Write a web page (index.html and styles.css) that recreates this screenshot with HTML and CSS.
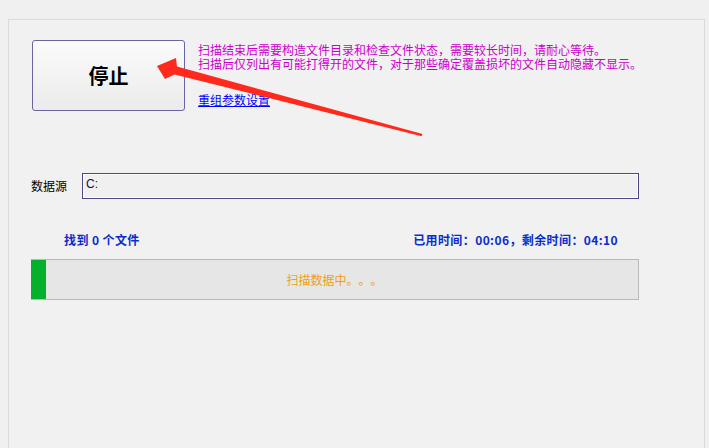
FILE: index.html
```html
<!DOCTYPE html>
<html>
<head>
<meta charset="utf-8">
<link rel="stylesheet" href="styles.css">
</head>
<body>
<div class="panel">
  <div class="top-row">
    <button class="stop-btn">停止</button>
    <div class="info">
      <div class="notes">
        <div>扫描结束后需要构造文件目录和检查文件状态，需要较长时间，请耐心等待。</div>
        <div>扫描后仅列出有可能打得开的文件，对于那些确定覆盖损坏的文件自动隐藏不显示。</div>
      </div>
      <a class="link" href="#">重组参数设置</a>
    </div>
  </div>
  <div class="source-row">
    <span class="label">数据源</span>
    <div class="source-box">C:</div>
  </div>
  <div class="status-row">
    <span>找到 0 个文件</span>
    <span>已用时间：00:06，剩余时间：04:10</span>
  </div>
  <div class="progress">
    <div class="fill" style="width:15px"></div>
    <div class="progress-text">扫描数据中。。。</div>
  </div>
</div>
<svg class="arrow" width="709" height="448" viewBox="0 0 709 448">
  <polygon points="157,66 176,58 177,66.5 422.5,134 421.5,136.2 174.5,74.5 165,79" fill="#ff2a1c"/>
</svg>
</body>
</html>
```
FILE: styles.css
```css
html, body {
  margin: 0;
  padding: 0;
  background: #f0f0f0;
  width: 709px;
  height: 448px;
  overflow: hidden;
  font-family: "Noto Sans CJK SC", "Liberation Sans", sans-serif;
  font-size: 12px;
  text-spacing-trim: space-all;
}
.panel {
  margin: 19px 0 0 8px;
  width: 697px;
  height: 440px;
  border: 1px solid #dadada;
  border-bottom: none;
  background: #f1f1f1;
  padding: 0 0 0 22px;
  box-sizing: border-box;
}
.top-row {
  display: flex;
  margin-top: 20px;
  height: 71px;
}
.stop-btn {
  margin-left: 1px;
  width: 153px;
  height: 71px;
  border: 1px solid #6a64a4;
  border-radius: 3px;
  background: linear-gradient(#fbfbfb, #ebebeb);
  font-family: "Noto Sans CJK SC", sans-serif;
  font-size: 20px;
  font-weight: bold;
  color: #000;
  padding: 0;
}
.info {
  margin-left: 13px;
  padding-top: 3px;
  display: flex;
  flex-direction: column;
}
.notes {
  color: #cc00cc;
  line-height: 14px;
  white-space: nowrap;
}
.link {
  margin-top: 22px;
  color: #0000ff;
  line-height: 14px;
  text-decoration: underline;
  align-self: flex-start;
}
.source-row {
  display: flex;
  align-items: center;
  margin-top: 62px;
  height: 26px;
}
.label {
  width: 51px;
  color: #000;
  line-height: 14px;
}
.source-box {
  width: 557px;
  height: 26px;
  box-sizing: border-box;
  border: 1px solid #4b4785;
  box-shadow: inset 0 0 0 1px #ffffff;
  background: #f0f0f0;
  font-family: "Liberation Sans", sans-serif;
  font-size: 12px;
  color: #101040;
  padding: 3px 0 0 3px;
  line-height: 14px;
}
.status-row {
  display: flex;
  justify-content: space-between;
  width: 608px;
  box-sizing: border-box;
  padding: 0 21px 0 33px;
  margin-top: 34px;
  line-height: 14px;
  color: #0a2ccc;
  font-weight: bold;
  letter-spacing: 0.4px;
}
.progress {
  margin-top: 12px;
  width: 608px;
  height: 41px;
  box-sizing: border-box;
  border: 1px solid #b8b8b8;
  border-left: none;
  background: #e6e6e6;
  display: flex;
  align-items: center;
}
.fill {
  align-self: stretch;
  background: #05b12a;
}
.progress-text {
  flex: 1;
  text-align: center;
  color: #f0a010;
  line-height: 14px;
  padding-right: 15px;
}
.arrow {
  position: absolute;
  left: 0;
  top: 0;
  pointer-events: none;
}
```
